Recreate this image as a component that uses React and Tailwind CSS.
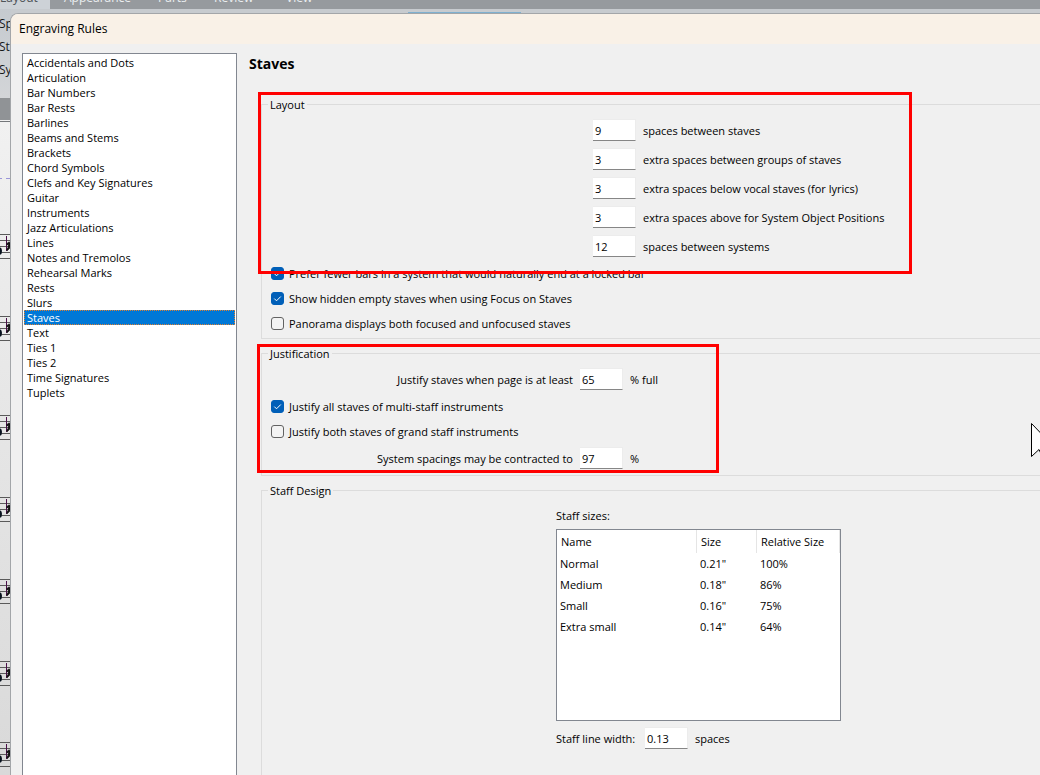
const CATEGORIES = [
  'Accidentals and Dots',
  'Articulation',
  'Bar Numbers',
  'Bar Rests',
  'Barlines',
  'Beams and Stems',
  'Brackets',
  'Chord Symbols',
  'Clefs and Key Signatures',
  'Guitar',
  'Instruments',
  'Jazz Articulations',
  'Lines',
  'Notes and Tremolos',
  'Rehearsal Marks',
  'Rests',
  'Slurs',
  'Staves',
  'Text',
  'Ties 1',
  'Ties 2',
  'Time Signatures',
  'Tuplets',
]

const SPACINGS = [
  { id: 'between-staves', value: '9', label: 'spaces between staves' },
  { id: 'between-groups', value: '3', label: 'extra spaces between groups of staves' },
  { id: 'below-vocal', value: '3', label: 'extra spaces below vocal staves (for lyrics)' },
  { id: 'above-objects', value: '3', label: 'extra spaces above for System Object Positions' },
  { id: 'between-systems', value: '12', label: 'spaces between systems' },
]

const STAFF_SIZES = [
  { name: 'Normal', size: '0.21"', relative: '100%' },
  { name: 'Medium', size: '0.18"', relative: '86%' },
  { name: 'Small', size: '0.16"', relative: '75%' },
  { name: 'Extra small', size: '0.14"', relative: '64%' },
]

const STAFF_TOPS = [234, 316, 415, 497, 579, 661, 742]

function NumberField({ id, value }) {
  return (
    <input
      id={id}
      type="text"
      defaultValue={value}
      className="w-[43px] h-[22px] shrink-0 bg-white border border-l-0 border-[#ececec] border-b-[#868686] pl-[2px] leading-4 outline-none"
    />
  )
}

function CheckOption({ label, checked }) {
  return (
    <label className="flex items-center gap-[5px] h-[15px] whitespace-nowrap">
      <span className="grid size-[13px] shrink-0">
        <input
          type="checkbox"
          defaultChecked={checked}
          className="peer appearance-none col-start-1 row-start-1 size-[13px] rounded-[3px] border border-[#626262] bg-[#f3f3f3] checked:border-[#005fb8] checked:bg-[#005fb8]"
        />
        <svg viewBox="0 0 13 13" className="hidden peer-checked:block col-start-1 row-start-1 size-[13px] pointer-events-none" fill="none" stroke="#fff" strokeWidth="1">
          <path d="M3.3 6.6L5.5 8.8L9.8 4.5" />
        </svg>
      </span>
      {label}
    </label>
  )
}

function Group({ title, className, children }) {
  return (
    <fieldset className={`min-w-0 border border-[#dcdcdc] px-[9px] ${className}`}>
      <legend className="-ml-[3px] px-[2px] h-[15px] leading-[15px]">{title}</legend>
      {children}
    </fieldset>
  )
}

function ScoreStrip() {
  return (
    <svg className="block w-[11px] h-[775px]" fill="none">
      <defs>
        <linearGradient id="panel" x1="0" y1="0" x2="0" y2="1">
          <stop offset="0" stopColor="#c5cacf" />
          <stop offset="1" stopColor="#d3d5d8" />
        </linearGradient>
        <linearGradient id="paper" x1="0" y1="0" x2="0" y2="1">
          <stop offset="0" stopColor="#f1f1f1" />
          <stop offset="1" stopColor="#d9d9d9" />
        </linearGradient>
      </defs>
      <rect y="9" width="100%" height="89" fill="url(#panel)" />
      <rect y="98" width="100%" height="22" fill="#909396" />
      <rect y="120" width="100%" height="655" fill="url(#paper)" />
      <path d="M0 121.5H11" stroke="#74777a" />
      <path d="M0 178.5H2M6 178.5H11" stroke="#9a96d8" />
      {STAFF_TOPS.map(top => (
        <g key={top} transform={`translate(0 ${top})`}>
          <path d="M0 .5H11M0 6.5H11M0 12.5H11M0 18.5H11M0 24.5H11" stroke="#5a5a5a" />
          <ellipse cx="-1" cy="17" rx="3" ry="4" fill="#06101c" />
          <path d="M6.5 2V17" stroke="#4a1048" />
          <path d="M7 9.5C8.5 7.5 11 7.8 10.8 10.5C10.5 13 9 15.5 7 16.5V15C8 14 8.8 12.5 8.7 11C8.6 10 8 10.2 7 11Z" fill="#101010" stroke="#101010" />
        </g>
      ))}
    </svg>
  )
}

function AppBackdrop() {
  return (
    <div className="absolute inset-0 overflow-hidden bg-[#c7cbcf]" aria-hidden="true">
      <div className="flex items-end h-[9px] overflow-hidden bg-[#969a9e] text-[12px] leading-4 text-[#eceff1]">
        <span className="w-[50px] pb-[3px] bg-[#cdd2d7] text-[#4e5357]">Layout</span>
        <span className="w-[108px] pl-[14px] pb-[3px]">Appearance</span>
        <span className="w-14 pb-[3px]">Parts</span>
        <span className="w-[72px] pb-[3px]">Review</span>
        <span className="pb-[3px]">View</span>
      </div>
      <div className="ml-[408px] mt-[3px] w-[113px] h-[2px] bg-[#7fb0cf]" />
      <div className="absolute left-0 top-0">
        <ScoreStrip />
      </div>
      <div className="absolute left-0 top-3 w-[10px] overflow-hidden text-[12px] leading-[23px] text-[#17191b] whitespace-nowrap">
        <div className="-ml-px">Spacing</div>
        <div className="-ml-px">Staff</div>
        <div className="-ml-px">System</div>
      </div>
    </div>
  )
}

export default function App() {
  return (
    <div className="relative h-screen overflow-hidden text-[11px] leading-[15px] text-black font-['Open_Sans','Noto_Sans',sans-serif]">
      <AppBackdrop />

      <div className="relative pt-[13px] pl-[10px] h-full">
        <div role="dialog" aria-labelledby="dialog-title" className="flex flex-col h-full overflow-hidden rounded-tl-lg border-t border-l border-[#a3a6a9] bg-[#f0f0f0]">
          <h1 id="dialog-title" className="h-[30px] shrink-0 bg-[#f9f1e7] pl-2 text-[12px] leading-[30px]">Engraving Rules</h1>

          <div className="flex flex-1 min-h-0 pl-[11px] pt-[9px]">
            <ul className="w-[215px] shrink-0 border border-b-0 border-[#828790] bg-white p-px">
              {CATEGORIES.map(name => (
                <li key={name}>
                  <button
                    type="button"
                    className={`block w-full h-[15px] pl-[2px] text-left border border-dotted leading-[13px] ${
                      name === 'Staves' ? 'bg-[#0078d7] text-white border-[#e08030]' : 'border-transparent'
                    }`}
                  >
                    {name}
                  </button>
                </li>
              ))}
            </ul>

            <main className="flex-1 min-w-0 pl-3">
              <h2 className="text-[14px] leading-[22px] font-bold">Staves</h2>

              <div className="flex flex-col gap-[7px] mt-[22px] ml-3 -mr-2">
                <Group title="Layout" className="pb-[7px]">
                  <div className="flex flex-col gap-[7px] pt-[7px] ml-[322px]">
                    {SPACINGS.map(item => (
                      <div key={item.id} className="flex items-center gap-[7px] whitespace-nowrap">
                        <NumberField id={item.id} value={item.value} />
                        <label htmlFor={item.id}>{item.label}</label>
                      </div>
                    ))}
                  </div>
                  <div className="flex flex-col gap-[10px] mt-[9px]">
                    <CheckOption label="Prefer fewer bars in a system that would naturally end at a locked bar" checked />
                    <CheckOption label="Show hidden empty staves when using Focus on Staves" checked />
                    <CheckOption label="Panorama displays both focused and unfocused staves" />
                  </div>
                </Group>

                <Group title="Justification" className="pb-[6px]">
                  <div className="pt-[7px]">
                    <div className="flex items-center gap-[7px]">
                      <label htmlFor="justify-full" className="w-[302px] text-right">Justify staves when page is at least</label>
                      <NumberField id="justify-full" value="65" />
                      <span>% full</span>
                    </div>
                    <div className="flex flex-col gap-[10px] mt-[9px] mb-2">
                      <CheckOption label="Justify all staves of multi-staff instruments" checked />
                      <CheckOption label="Justify both staves of grand staff instruments" />
                    </div>
                    <div className="flex items-center gap-[7px]">
                      <label htmlFor="contract-to" className="w-[302px] text-right">System spacings may be contracted to</label>
                      <NumberField id="contract-to" value="97" />
                      <span>%</span>
                    </div>
                  </div>
                </Group>

                <Group title="Staff Design" className="pb-16">
                  <div className="ml-[285px] pt-[10px]">
                    <h3 id="staff-sizes">Staff sizes:</h3>
                    <div className="mt-[6px] w-[285px] h-48 border border-[#828790] bg-white">
                      <table aria-labelledby="staff-sizes" className="w-full table-fixed border-separate border-spacing-0">
                        <thead>
                          <tr className="h-[23px] text-left">
                            <th className="w-[140px] pl-1 font-normal border-r border-[#e5e5e5]">Name</th>
                            <th className="w-[60px] pl-1 font-normal border-r border-[#e5e5e5]">Size</th>
                            <th className="pl-1 font-normal border-r border-[#e5e5e5]">Relative Size</th>
                          </tr>
                        </thead>
                        <tbody>
                          {STAFF_SIZES.map(row => (
                            <tr key={row.name} className="h-[21px]">
                              <td className="pl-[3px]">{row.name}</td>
                              <td className="pl-[3px]">{row.size}</td>
                              <td className="pl-[3px]">{row.relative}</td>
                            </tr>
                          ))}
                        </tbody>
                      </table>
                    </div>
                    <div className="flex items-center gap-[7px] mt-[6px]">
                      <label htmlFor="line-width" className="w-[82px] whitespace-nowrap">Staff line width:</label>
                      <NumberField id="line-width" value="0.13" />
                      <span>spaces</span>
                    </div>
                  </div>
                </Group>
              </div>
            </main>
          </div>
        </div>
      </div>

      {/* highlight boxes and mouse pointer float over the dialog */}
      <div className="absolute left-[258px] top-[92px] w-[654px] h-[182px] border-3 border-[#ff0000] pointer-events-none" />
      <div className="absolute left-[257px] top-[344px] w-[462px] h-[129px] border-3 border-[#ff0000] pointer-events-none" />
      <svg className="absolute left-[1031px] top-[422px] pointer-events-none" width="26" height="38" viewBox="0 0 26 38">
        <path d="M.5 1.5V34.5L8 27.5L12.5 37L17 35L13 26H24Z" fill="#fff" stroke="#000" />
      </svg>
    </div>
  )
}
